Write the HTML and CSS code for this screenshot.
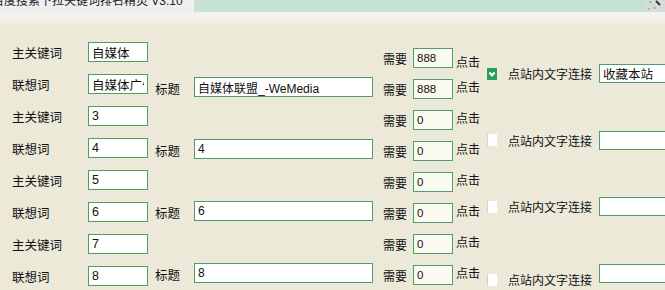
FILE: index.html
```html
<!DOCTYPE html>
<html lang="zh-CN">
<head>
    <meta charset="UTF-8">
    <title>百度搜索下拉关键词排名精灵 V3.10</title>
    <link rel="stylesheet" href="styles.css">
</head>
<body>
    <div class="titlebar">
        <div class="title-text">百度搜索下拉关键词排名精灵 V3.10</div>
        <div class="title-green"></div>
        <div class="title-icon">
            <svg width="20" height="12" viewBox="0 0 20 12">
                <path d="M11 1 L15 5" stroke="#333" stroke-width="2" fill="none"/>
                <path d="M4 2 h3 M8 8 h3 M3 9 h2" stroke="#999" stroke-width="1"/>
            </svg>
        </div>
    </div>

    <div class="form">
        <!-- keyword column -->
        <div class="col-kw">
            <div class="kw-row"><span class="label">主关键词</span><input class="kw" value="自媒体"></div>
            <div class="kw-row"><span class="label">联想词</span><input class="kw" value="自媒体广告"></div>
            <div class="kw-row"><span class="label">主关键词</span><input class="kw" value="3"></div>
            <div class="kw-row"><span class="label">联想词</span><input class="kw" value="4"></div>
            <div class="kw-row"><span class="label">主关键词</span><input class="kw" value="5"></div>
            <div class="kw-row"><span class="label">联想词</span><input class="kw" value="6"></div>
            <div class="kw-row"><span class="label">主关键词</span><input class="kw" value="7"></div>
            <div class="kw-row"><span class="label">联想词</span><input class="kw" value="8"></div>
        </div>

        <!-- title column -->
        <div class="col-title">
            <div class="title-row"><span class="label-t">标题</span><input class="ttl" value="自媒体联盟_-WeMedia"></div>
            <div class="title-row"><span class="label-t">标题</span><input class="ttl" value="4"></div>
            <div class="title-row"><span class="label-t">标题</span><input class="ttl" value="6"></div>
            <div class="title-row"><span class="label-t">标题</span><input class="ttl" value="8"></div>
        </div>

        <!-- clicks column -->
        <div class="col-need">
            <div class="need-row"><span class="label-n">需要</span><input class="num" value="888"><span class="click low">点击</span></div>
            <div class="need-row"><span class="label-n">需要</span><input class="num" value="888"><span class="click">点击</span></div>
            <div class="need-row"><span class="label-n">需要</span><input class="num" value="0"><span class="click">点击</span></div>
            <div class="need-row"><span class="label-n">需要</span><input class="num" value="0"><span class="click">点击</span></div>
            <div class="need-row"><span class="label-n">需要</span><input class="num" value="0"><span class="click">点击</span></div>
            <div class="need-row"><span class="label-n">需要</span><input class="num" value="0"><span class="click">点击</span></div>
            <div class="need-row"><span class="label-n">需要</span><input class="num" value="0"><span class="click">点击</span></div>
            <div class="need-row"><span class="label-n">需要</span><input class="num" value="0"><span class="click">点击</span></div>
        </div>

        <!-- link column -->
        <div class="col-link">
            <div class="link-row">
                <span class="check on">
                    <svg width="10" height="12" viewBox="0 0 10 12"><polyline points="2.5,4.5 5,7.5 7.5,4.5" stroke="#fff" stroke-width="2" fill="none"/></svg>
                </span>
                <span class="label-l">点站内文字连接</span>
                <input class="link" value="收藏本站">
            </div>
            <div class="link-row">
                <span class="check"></span>
                <span class="label-l">点站内文字连接</span>
                <input class="link" value="">
            </div>
            <div class="link-row">
                <span class="check"></span>
                <span class="label-l">点站内文字连接</span>
                <input class="link" value="">
            </div>
            <div class="link-row last">
                <span class="check"></span>
                <span class="label-l">点站内文字连接</span>
                <input class="link" value="">
            </div>
        </div>
    </div>
</body>
</html>
```

FILE: styles.css
```css
html, body {
    margin: 0;
    padding: 0;
    overflow: hidden;
}
body {
    width: 665px;
    height: 290px;
    background: #ece9d8;
    font-family: "Liberation Sans", "Noto Sans CJK SC", sans-serif;
    font-size: 12px;
    color: #111;
}
.titlebar {
    display: flex;
    height: 13px;
    background: #efefef;
    overflow: hidden;
}
.title-text {
    flex-shrink: 0;
    width: 202px;
    margin-left: -8px;
    margin-top: -6px;
    line-height: 14px;
    font-size: 12px;
    white-space: nowrap;
    color: #222;
}
.title-green {
    flex: 1;
    height: 12px;
    background: #c6e2d1;
}
.title-icon {
    flex-shrink: 0;
    width: 20px;
    height: 12px;
    background: #d6dcd8;
}
.form {
    display: flex;
    height: 277px;
    background: linear-gradient(#f3f3ef 0, #f3f3ef 3px, #ece9d8 14px);
}
.form > div {
    flex-shrink: 0;
}
.form span {
    flex-shrink: 0;
    white-space: nowrap;
}
input {
    flex-shrink: 0;
    box-sizing: border-box;
    height: 20px;
    margin: 0;
    padding: 0 3px;
    border: 1px solid #4e9e6d;
    background: #fff;
    font-family: "Liberation Sans", "Noto Sans CJK SC", sans-serif;
    font-size: 12px;
    color: #111;
    outline: none;
}
.col-kw {
    padding-top: 23px;
    padding-left: 12px;
}
.kw-row {
    display: flex;
    align-items: center;
    height: 32px;
}
.label {
    width: 76px;
    font-size: 12.5px;
}
.kw {
    width: 60px;
    font-size: 12.5px;
}
.col-title {
    display: flex;
    flex-direction: column;
    gap: 42px;
    padding-top: 64px;
    margin-left: 7px;
}
.title-row {
    display: flex;
    align-items: center;
    height: 20px;
}
.label-t {
    width: 39px;
    font-size: 12.5px;
    padding-top: 3px;
}
.ttl {
    width: 179px;
    font-size: 12px;
}
.col-need {
    display: flex;
    flex-direction: column;
    gap: 11px;
    padding-top: 35px;
    margin-left: 10px;
}
.need-row {
    display: flex;
    align-items: center;
    height: 20px;
}
.label-n {
    width: 30px;
    font-size: 12px;
}
.num {
    width: 40px;
    background: #fbfaf1;
    font-size: 11.5px;
}
.click {
    margin-left: 3px;
    align-self: flex-start;
    margin-top: -1px;
}
.click.low {
    align-self: flex-end;
    margin-bottom: -2px;
}
.col-link {
    display: flex;
    flex-direction: column;
    gap: 47.7px;
    padding-top: 51px;
    margin-left: 7px;
}
.link-row {
    display: flex;
    align-items: center;
    height: 19px;
}
.check {
    box-sizing: border-box;
    width: 10px;
    height: 12px;
    margin-right: 11px;
    background: #fff;
    border-left: 1px solid #d5d3c6;
}
.check.on {
    background: #2b9e5e;
    border-left: none;
}
.check svg {
    display: block;
}
.label-l {
    width: 91px;
    font-size: 12px;
}
.link {
    width: 66px;
    height: 19px;
    border-right: none;
    font-size: 12.5px;
}
.link-row.last .check,
.link-row.last .label-l {
    margin-top: 12px;
}
```
